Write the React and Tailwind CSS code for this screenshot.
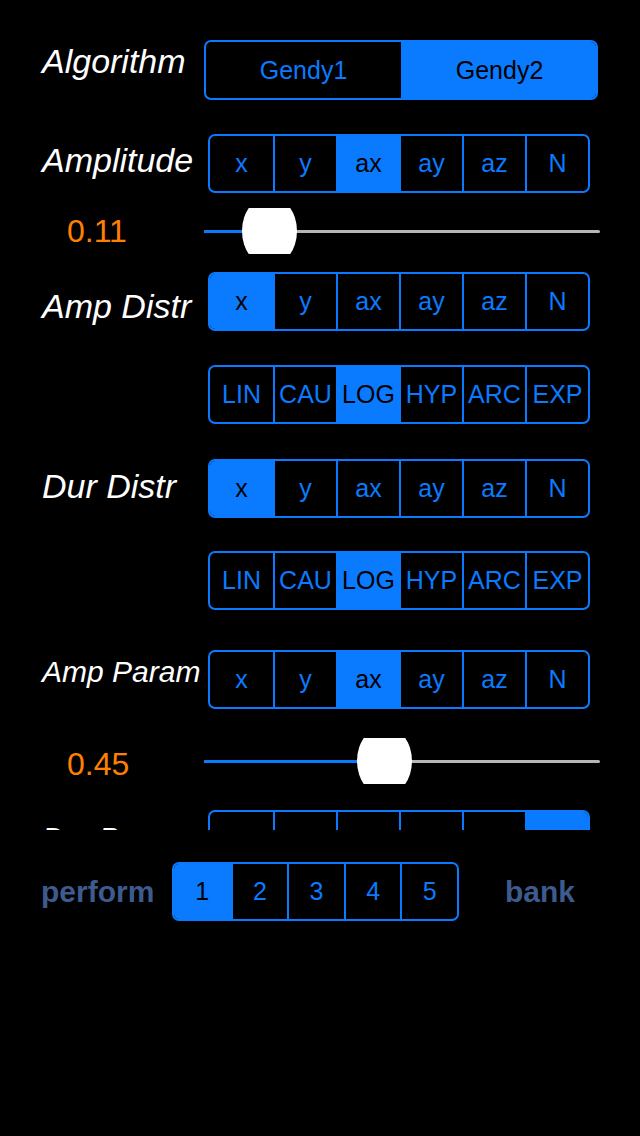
import React, { useState } from "react";

const AXES = ["x", "y", "ax", "ay", "az", "N"];
const DISTS = ["LIN", "CAU", "LOG", "HYP", "ARC", "EXP"];

function Segmented({ items, selected, className = "", textClass = "text-[25px]", onSelect }) {
    return (
        <div
            className={`grid border-2 border-[#0a7aff] rounded-[7px] overflow-hidden ${className}`}
            style={{ gridTemplateColumns: `repeat(${items.length}, minmax(0, 1fr))` }}
        >
            {items.map((item, idx) => (
                <div
                    key={item}
                    onClick={() => onSelect && onSelect(idx)}
                    className={`flex items-center justify-center whitespace-nowrap leading-none ${textClass} ${
                        idx > 0 ? "border-l-2 border-[#0a7aff]" : ""
                    } ${selected === idx ? "bg-[#0a7aff] text-black" : "text-[#0a7aff]"}`}
                >
                    {item}
                </div>
            ))}
        </div>
    );
}

function Slider({ value }) {
    // track is 396 wide, thumb is 55 wide
    const left = value * (396 - 55);
    return (
        <div className="relative w-[396px] h-[46px] ml-[42px]">
            <div className="absolute left-0 right-0 top-[22px] h-[3px] rounded-full bg-[#b6b6b6]" />
            <div
                className="absolute left-0 top-[22px] h-[3px] rounded-full bg-[#0a7aff]"
                style={{ width: left + 27 }}
            />
            <div className="absolute top-0 w-[55px] h-[46px] overflow-hidden" style={{ left }}>
                <div className="w-[55px] h-[70px] -mt-[12px] rounded-[50%] bg-white" />
            </div>
        </div>
    );
}

function Label({ children, className = "" }) {
    return <div className={`w-[162px] shrink-0 italic text-white leading-none ${className}`}>{children}</div>;
}

export default function App() {
    const [algo, setAlgo] = useState(1);
    const [bank, setBank] = useState(0);

    return (
        <div
            className="w-[640px] h-[1136px] bg-black overflow-hidden"
            style={{ fontFamily: '"Liberation Sans", Arial, sans-serif' }}
        >
            <div className="h-[830px] overflow-hidden pt-[40px] pl-[42px]">
                {/* Algorithm */}
                <div className="flex items-start">
                    <Label className="text-[34px] mt-[4px]">Algorithm</Label>
                    <Segmented
                        items={["Gendy1", "Gendy2"]}
                        selected={algo}
                        onSelect={setAlgo}
                        className="w-[394px] h-[60px]"
                    />
                </div>

                {/* Amplitude */}
                <div className="flex items-start mt-[34px]">
                    <Label className="text-[34px] mt-[9px] w-[166px]">Amplitude</Label>
                    <Segmented items={AXES} selected={2} className="w-[382px] h-[59px]" />
                </div>
                <div className="flex items-center mt-[15px]">
                    <div className="w-[120px] pl-[25px] text-[32px] leading-none text-[#ff8000]">0.11</div>
                    <Slider value={0.11} />
                </div>

                {/* Amp Distr */}
                <div className="flex items-start mt-[18px]">
                    <Label className="text-[34px] mt-[17px] w-[166px]">Amp Distr</Label>
                    <Segmented items={AXES} selected={0} className="w-[382px] h-[59px]" />
                </div>
                <div className="flex items-start mt-[34px] pl-[166px]">
                    <Segmented items={DISTS} selected={2} className="w-[382px] h-[59px]" />
                </div>

                {/* Dur Distr */}
                <div className="flex items-start mt-[35px]">
                    <Label className="text-[34px] mt-[10px] w-[166px]">Dur Distr</Label>
                    <Segmented items={AXES} selected={0} className="w-[382px] h-[59px]" />
                </div>
                <div className="flex items-start mt-[33px] pl-[166px]">
                    <Segmented items={DISTS} selected={2} className="w-[382px] h-[59px]" />
                </div>

                {/* Amp Param */}
                <div className="flex items-start mt-[40px]">
                    <Label className="text-[30px] mt-[7px] w-[166px]">Amp Param</Label>
                    <Segmented items={AXES} selected={2} className="w-[382px] h-[59px]" />
                </div>
                <div className="flex items-center mt-[29px]">
                    <div className="w-[120px] pl-[25px] pt-[6px] text-[32px] leading-none text-[#ff8000]">0.45</div>
                    <Slider value={0.45} />
                </div>

                {/* Dur Param (cut off by the scroll view) */}
                <div className="flex items-start mt-[26px]">
                    <Label className="text-[30px] mt-[13px] w-[166px]">Dur Param</Label>
                    <Segmented items={AXES} selected={5} className="w-[382px] h-[59px]" />
                </div>
            </div>

            {/* bottom bar */}
            <div className="flex items-center mt-[32px] pl-[41px]">
                <div className="w-[131px] text-[30px] font-bold leading-none text-[#3d5b8e]">perform</div>
                <Segmented
                    items={["1", "2", "3", "4", "5"]}
                    selected={bank}
                    onSelect={setBank}
                    className="w-[287px] h-[59px]"
                />
                <div className="ml-[46px] text-[30px] font-bold leading-none text-[#3d5b8e]">bank</div>
            </div>
        </div>
    );
}
